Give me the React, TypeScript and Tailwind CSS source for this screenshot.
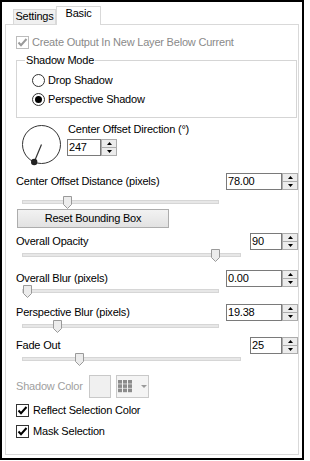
import React from "react";

function Arrow({ up }: { up?: boolean }) {
  return (
    <svg width="5" height="3" viewBox="0 0 5 3">
      <path d={up ? "M0 3 L2.5 0 L5 3 Z" : "M0 0 L2.5 3 L5 0 Z"} fill="#000" />
    </svg>
  );
}

function SpinBox({ value, boxClass }: { value: string; boxClass: string }) {
  return (
    <div className="flex h-[17px]">
      <div className={`${boxClass} h-full border border-[#7a7a7a] bg-white pl-[1px] text-[11px] leading-[15px]`}>
        {value}
      </div>
      <div className="flex w-[16px] flex-col border border-[#acacac] bg-[#ececec]">
        <div className="flex flex-1 items-center justify-center border-b border-[#acacac]">
          <Arrow up />
        </div>
        <div className="flex flex-1 items-center justify-center">
          <Arrow />
        </div>
      </div>
    </div>
  );
}

function Thumb({ className }: { className: string }) {
  return (
    <svg className={`absolute top-0 ${className}`} width="9" height="13" viewBox="0 0 9 13">
      <path d="M0.5 0.5 H8.5 V8.5 L4.5 12.5 L0.5 8.5 Z" fill="#ececec" stroke="#9a9a9a" />
    </svg>
  );
}

interface ValueRowProps {
  label: string;
  value: string;
  boxClass: string;
  rowClass: string;
  sliderClass: string;
  trackClass: string;
  thumbClass: string;
}

function ValueRow({ label, value, boxClass, rowClass, sliderClass, trackClass, thumbClass }: ValueRowProps) {
  return (
    <>
      <div className={`flex h-[17px] items-center ${rowClass}`}>
        <span>{label}</span>
        <div className="ml-auto">
          <SpinBox value={value} boxClass={boxClass} />
        </div>
      </div>
      <div className={`relative ml-[6px] h-[13px] ${sliderClass} ${trackClass}`}>
        <div className="absolute inset-x-0 top-[4px] h-[4px] border border-[#d6d6d6] bg-[#e7e7e7]" />
        <Thumb className={thumbClass} />
      </div>
    </>
  );
}

function CheckBox({ disabled }: { disabled?: boolean }) {
  return (
    <div
      className={`flex h-[13px] w-[13px] items-center justify-center border bg-white ${
        disabled ? "border-[#bcbcbc]" : "border-[#333]"
      }`}
    >
      <svg width="11" height="11" viewBox="0 0 11 11">
        <path
          d="M1.5 5.5 L4 8.2 L9.5 2"
          fill="none"
          stroke={disabled ? "#9a9a9a" : "#000"}
          strokeWidth="2"
        />
      </svg>
    </div>
  );
}

function Radio({ checked }: { checked?: boolean }) {
  return (
    <div className="flex h-[13px] w-[13px] items-center justify-center rounded-full border border-[#333] bg-white">
      {checked && <div className="h-[7px] w-[7px] rounded-full bg-black" />}
    </div>
  );
}

function Dial() {
  return (
    <svg className="mt-[2px] ml-[5px]" width="42" height="43" viewBox="0 0 42 43">
      <circle cx="20.5" cy="20.5" r="19" fill="none" stroke="#333" strokeWidth="1" />
      <line x1="20.5" y1="20.5" x2="13.2" y2="38" stroke="#333" strokeWidth="1.2" />
      <circle cx="13.2" cy="38" r="3.2" fill="#222" />
    </svg>
  );
}

export default function App() {
  return (
    <div className="h-[460px] w-[304px] border-2 border-black bg-white pl-[3px] pr-[3px] font-['Liberation_Sans',Arial,sans-serif] text-[11px] leading-[15px] tracking-[-0.2px] text-black">
      <div className="flex h-[22px] items-end pl-[8px]">
        <div className="h-[15px] w-[43px] border-l border-r border-t border-[#d9d9d9] bg-[#f0f0f0] text-center leading-[13px]">
          Settings
        </div>
        <div className="relative z-10 -mb-[1px] h-[19px] w-[45px] border-l border-r border-t border-[#d9d9d9] bg-white text-center leading-[13px]">
          Basic
        </div>
      </div>
      <div className="flex h-[431px] flex-col border border-[#d9d9d9] pl-[10px] pt-[9px]">
        <div className="flex h-[16px] items-center text-[#8a8a8a]">
          <CheckBox disabled />
          <span className="ml-[3px]">Create Output In New Layer Below Current</span>
        </div>

        <div className="relative mt-[10px] mr-[1px] h-[58px] border border-[#d5d5d5] pl-[15px] pt-[11px]">
          <span className="absolute -top-[8px] left-[8px] bg-white px-[1px]">Shadow Mode</span>
          <div className="flex h-[16px] items-center">
            <Radio />
            <span className="ml-[3px]">Drop Shadow</span>
          </div>
          <div className="mt-[3px] flex h-[16px] items-center">
            <Radio checked />
            <span className="ml-[3px]">Perspective Shadow</span>
          </div>
        </div>

        <div className="mt-[4px] flex items-start">
          <Dial />
          <div className="ml-[4px] flex flex-col">
            <span className="pl-[1px]">Center Offset Direction (°)</span>
            <div className="mt-[2px]">
              <SpinBox value="247" boxClass="w-[34px]" />
            </div>
          </div>
        </div>

        <ValueRow
          label="Center Offset Distance (pixels)"
          value="78.00"
          boxClass="w-[56px]"
          rowClass="mt-[6px]"
          sliderClass="mt-[6px]"
          trackClass="w-[197px]"
          thumbClass="left-[41px]"
        />

        <button className="ml-[1px] h-[19px] w-[152px] border border-[#adadad] bg-gradient-to-b from-[#f2f2f2] to-[#e2e2e2] text-center leading-[15px]">
          Reset Bounding Box
        </button>

        <ValueRow
          label="Overall Opacity"
          value="90"
          boxClass="w-[32px]"
          rowClass="mt-[5px]"
          sliderClass="-mt-[1px]"
          trackClass="w-[219px]"
          thumbClass="left-[189px]"
        />
        <ValueRow
          label="Overall Blur (pixels)"
          value="0.00"
          boxClass="w-[56px]"
          rowClass="mt-[8px]"
          sliderClass="-mt-[2px]"
          trackClass="w-[197px]"
          thumbClass="left-[1px]"
        />
        <ValueRow
          label="Perspective Blur (pixels)"
          value="19.38"
          boxClass="w-[56px]"
          rowClass="mt-[6px]"
          sliderClass="-mt-[1px]"
          trackClass="w-[197px]"
          thumbClass="left-[31px]"
        />
        <ValueRow
          label="Fade Out"
          value="25"
          boxClass="w-[32px]"
          rowClass="mt-[4px]"
          sliderClass="-mt-[1px]"
          trackClass="w-[219px]"
          thumbClass="left-[53px]"
        />

        <div className="mt-[9px] flex h-[23px] items-center">
          <span className="w-[73px] text-[#a0a0a0]">Shadow Color</span>
          <div className="h-[23px] w-[22px] border border-[#c9c9c9] bg-[#f0f0f0]" />
          <div className="ml-[5px] flex h-[23px] w-[33px] items-center border border-[#c9c9c9] bg-[#f4f4f4] pl-[1px]">
            <svg width="15" height="13" viewBox="0 0 15 13">
              {[0, 1, 2].map((r) =>
                [0, 1, 2].map((c) => (
                  <rect key={`${r}-${c}`} x={c * 5} y={r * 4.3} width="4" height="3.6" fill="#8c8c8c" />
                ))
              )}
            </svg>
            <svg className="ml-[8px]" width="6" height="3" viewBox="0 0 6 3">
              <path d="M0 0 L3 3 L6 0 Z" fill="#9a9a9a" />
            </svg>
          </div>
        </div>

        <div className="mt-[4px] flex h-[16px] items-center">
          <CheckBox />
          <span className="ml-[4px]">Reflect Selection Color</span>
        </div>
        <div className="mt-[5px] flex h-[16px] items-center">
          <CheckBox />
          <span className="ml-[4px]">Mask Selection</span>
        </div>
      </div>
    </div>
  );
}
